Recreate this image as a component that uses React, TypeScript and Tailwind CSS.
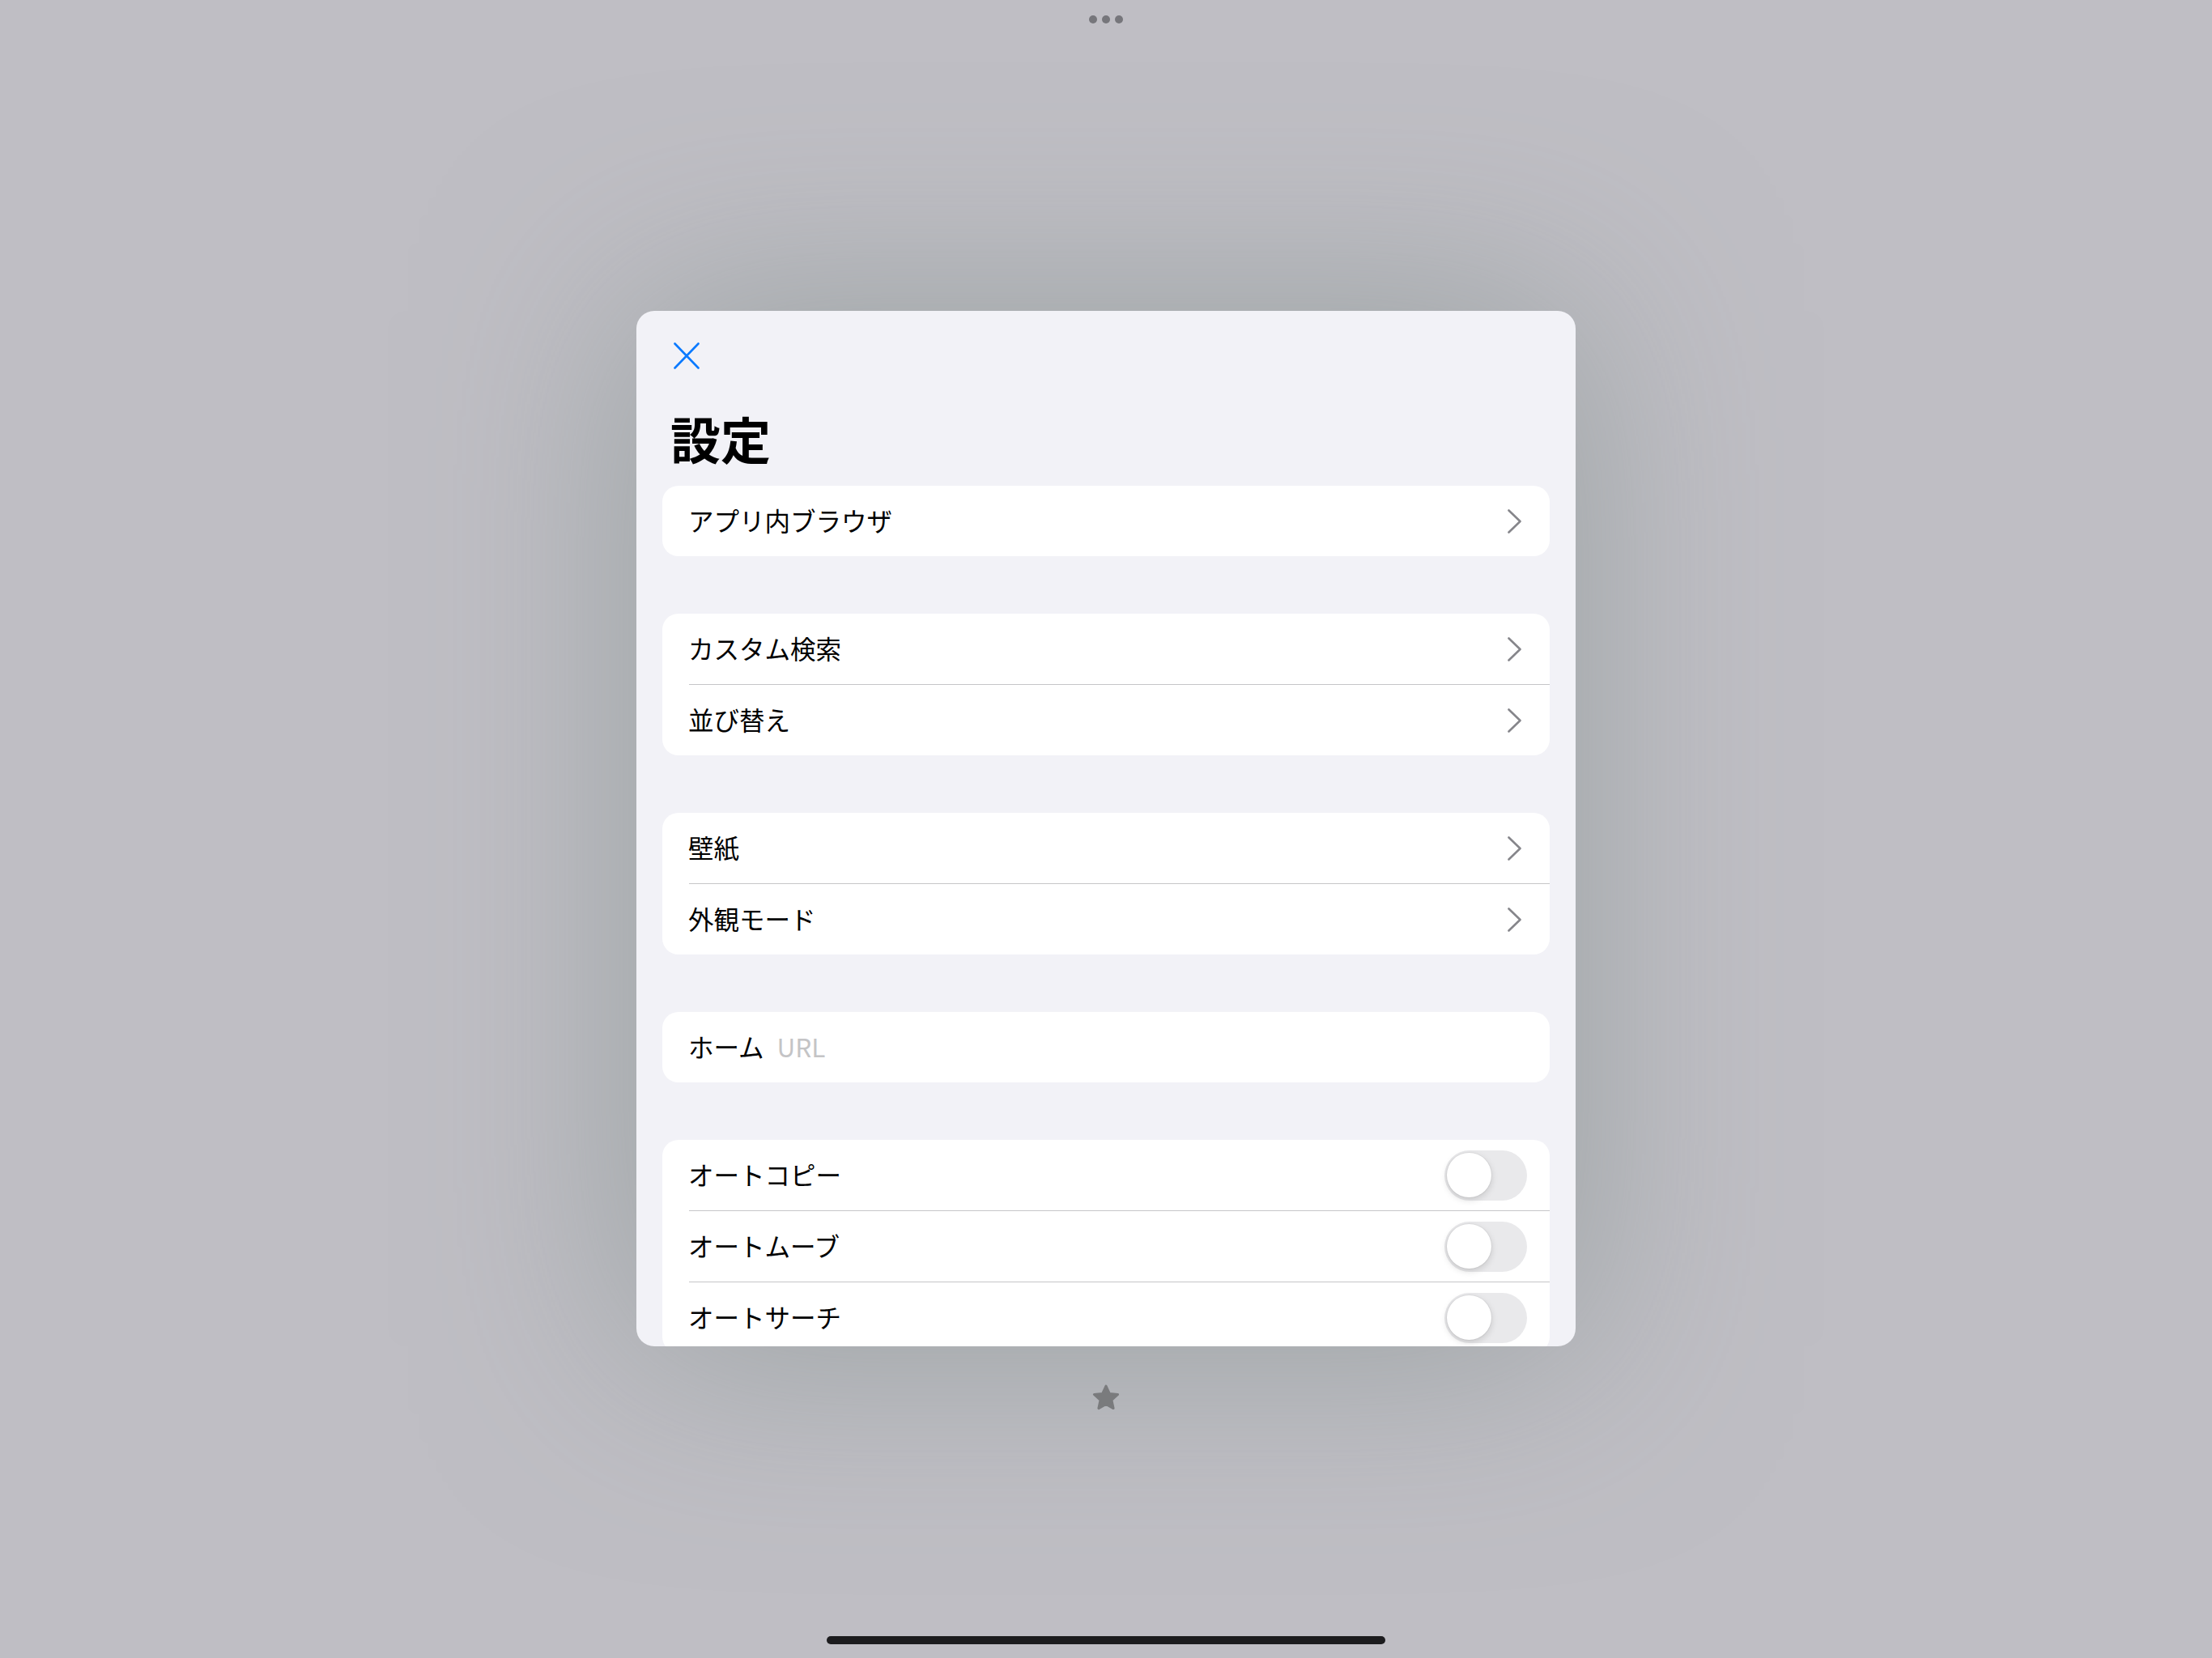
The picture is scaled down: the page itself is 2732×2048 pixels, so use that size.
import React from "react";

type Row =
  | { kind: "link"; label: string }
  | { kind: "input"; label: string; placeholder: string }
  | { kind: "toggle"; label: string };

const groups: Row[][] = [
  [{ kind: "link", label: "アプリ内ブラウザ" }],
  [
    { kind: "link", label: "カスタム検索" },
    { kind: "link", label: "並び替え" },
  ],
  [
    { kind: "link", label: "壁紙" },
    { kind: "link", label: "外観モード" },
  ],
  [{ kind: "input", label: "ホーム", placeholder: "URL" }],
  [
    { kind: "toggle", label: "オートコピー" },
    { kind: "toggle", label: "オートムーブ" },
    { kind: "toggle", label: "オートサーチ" },
  ],
];

function Chevron() {
  return (
    <svg width="17" height="30" viewBox="0 0 17 30" fill="none">
      <polyline
        points="1.5,1.5 15.5,15 1.5,28.5"
        stroke="#86868b"
        strokeWidth="2.6"
        strokeLinecap="round"
        strokeLinejoin="round"
      />
    </svg>
  );
}

function Toggle() {
  return (
    <div className="flex h-[62px] w-[102px] items-center rounded-full bg-[#e9e9eb] pl-[3px]">
      <div className="h-[55px] w-[55px] rounded-full bg-white shadow-[0_3px_8px_rgba(0,0,0,0.15),0_0_0_1px_rgba(0,0,0,0.04)]" />
    </div>
  );
}

function SettingRow({ row }: { row: Row }) {
  return (
    <div className="flex h-[87px] items-center pl-[32px] pr-[35px] text-[31.5px] leading-none text-black">
      <span className="-mt-[2px]">{row.label}</span>
      {row.kind === "input" ? (
        <span className="-mt-[2px] ml-[16px] text-[#c4c4c6]">
          {row.placeholder}
        </span>
      ) : null}
      <span className="flex-1" />
      {row.kind === "link" ? <Chevron /> : null}
      {row.kind === "toggle" ? (
        <span className="-mr-[7px]">
          <Toggle />
        </span>
      ) : null}
    </div>
  );
}

export default function App() {
  return (
    <div className="flex h-[2048px] w-[2732px] flex-col items-center overflow-hidden bg-[#bfbec4] font-['Noto_Sans_CJK_JP','Noto_Sans',sans-serif]">
      {/* multitasking dots */}
      <div className="mt-[19px] flex gap-[6px]">
        <span className="h-[10px] w-[10px] rounded-full bg-[#76767b]" />
        <span className="h-[10px] w-[10px] rounded-full bg-[#76767b]" />
        <span className="h-[10px] w-[10px] rounded-full bg-[#76767b]" />
      </div>

      {/* settings sheet */}
      <div className="mt-[355px] h-[1279px] w-[1160px] shrink-0 overflow-hidden rounded-[22px] bg-[#f2f2f7] shadow-[0_0_340px_rgba(138,150,148,0.7)]">
        <div className="px-[46px] pt-[39px]">
          <svg width="32" height="33" viewBox="0 0 32 33" fill="none">
            <path
              d="M1.5 1.5 L30.5 31.5 M30.5 1.5 L1.5 31.5"
              stroke="#0a7aff"
              strokeWidth="2.6"
              strokeLinecap="round"
            />
          </svg>
        </div>
        <h1 className="mt-[54px] pl-[42px] text-[62px] font-bold leading-[62px] text-black">
          設定
        </h1>
        <div className="mt-[28px] flex flex-col gap-[71px] px-[32px]">
          {groups.map((g, gi) => (
            <div key={gi} className="overflow-hidden rounded-[20px] bg-white">
              {g.map((row, ri) => (
                <div key={row.label}>
                  {ri > 0 ? (
                    <div className="ml-[33px] h-px bg-[#c6c6c8]" />
                  ) : null}
                  <SettingRow row={row} />
                </div>
              ))}
            </div>
          ))}
        </div>
      </div>

      {/* favourites star */}
      <svg className="mt-[46px]" width="36" height="35" viewBox="0 0 36 35">
        <polygon
          points="18,3 22.3,12.4 32.6,13.5 24.9,20.4 27.1,30.6 18,25.4 8.9,30.6 11.1,20.4 3.4,13.5 13.7,12.4"
          fill="#7a7b7d"
          stroke="#7a7b7d"
          strokeWidth="3"
          strokeLinejoin="round"
        />
      </svg>

      {/* home indicator */}
      <div className="mt-[277px] h-[10px] w-[690px] rounded-full bg-[#1c1c1e]" />
    </div>
  );
}
